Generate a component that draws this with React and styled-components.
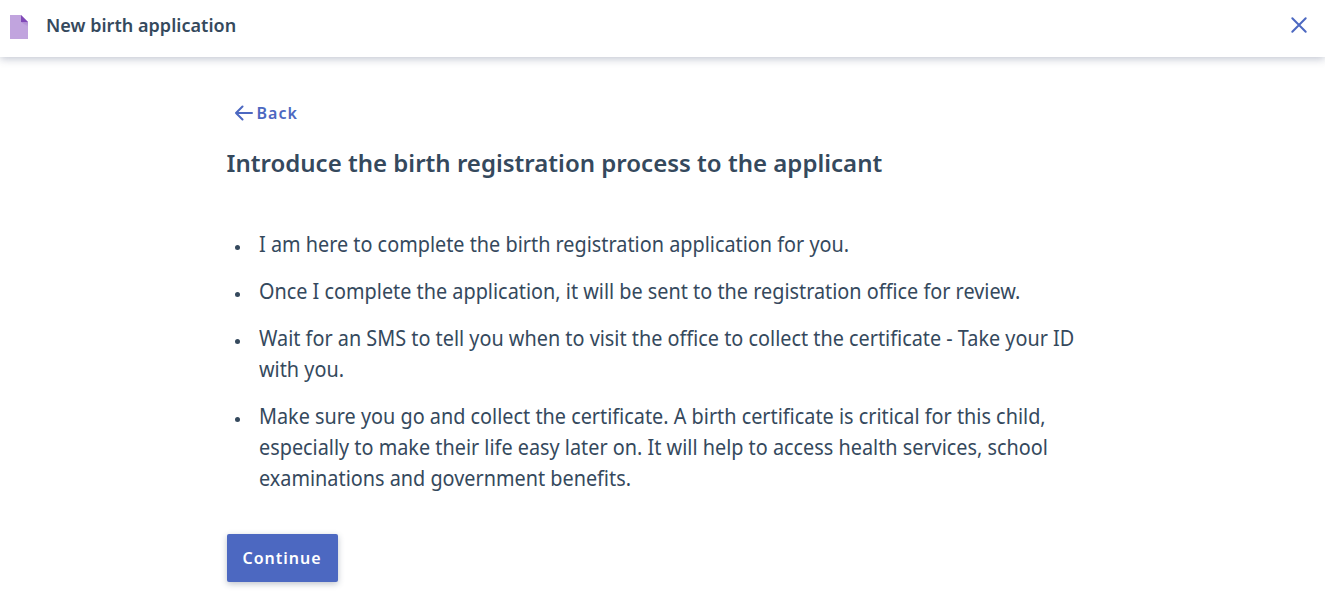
import React from 'react';
import styled, { createGlobalStyle } from 'styled-components';

const GlobalStyle = createGlobalStyle`
  * { box-sizing: border-box; }
  body {
    margin: 0;
    background: #ffffff;
    color: #35495d;
    font-family: 'Noto Sans', sans-serif;
  }
`;

const TopBar = styled.header`
  display: flex;
  align-items: center;
  height: 57px;
  padding: 0 16px 7px 10px;
  background: #ffffff;
  box-shadow: 0 2px 8px rgba(53, 67, 103, 0.3);
`;

const TitleText = styled.div`
  flex: 1;
  margin-left: 18px;
  font-size: 18px;
  line-height: 24px;
  font-weight: 600;
  letter-spacing: 0.03px;
`;

const IconButton = styled.button`
  display: flex;
  padding: 0;
  border: 0;
  background: none;
  color: #4c68c1;
`;

const Content = styled.main`
  width: 872px;
  margin: 0 auto;
  padding: 44px 0 18px;
`;

const BackButton = styled.button`
  display: flex;
  align-items: center;
  gap: 4px;
  height: 24px;
  padding: 0 8px;
  border: 0;
  background: none;
  color: #4c68c1;
  font: 600 16px/24px 'Noto Sans', sans-serif;
  letter-spacing: 1px;
`;

const Heading = styled.h1`
  margin: 20px 0 0;
  font-size: 24px;
  line-height: 36px;
  font-weight: 600;
  letter-spacing: 0.01px;
`;

const List = styled.ul`
  display: flex;
  flex-direction: column;
  gap: 16px;
  margin: 48px 0 0;
  padding: 0;
  list-style: none;
`;

const Item = styled.li`
  display: flex;
  font-size: 21px;
  line-height: 31px;
  &::before {
    content: '';
    flex: none;
    width: 5px;
    height: 5px;
    margin: 16px 19px 0 8px;
    border-radius: 50%;
    background: #35495d;
  }
`;

/* Condensed body text: laid out wider, then narrowed to the column. */
const ItemText = styled.span`
  flex: none;
  width: 888px;
  transform: scaleX(0.9446);
  transform-origin: 0 0;
`;

const PrimaryButton = styled.button`
  width: 111px;
  height: 48px;
  margin-top: 40px;
  padding: 0;
  border: 0;
  border-radius: 2px;
  background: #4c68c1;
  color: #ffffff;
  font: 600 16px/24px 'Noto Sans', sans-serif;
  letter-spacing: 1px;
  box-shadow: 0 2px 6px rgba(53, 67, 93, 0.32);
`;

const steps = [
  'I am here to complete the birth registration application for you.',
  'Once I complete the application, it will be sent to the registration office for review.',
  'Wait for an SMS to tell you when to visit the office to collect the certificate - Take your ID with you.',
  'Make sure you go and collect the certificate. A birth certificate is critical for this child, especially to make their life easy later on. It will help to access health services, school examinations and government benefits.',
];

const DocumentSvg = styled.svg`
  flex: none;
  margin-top: 4px;
`;

const DocumentIcon = () => (
  <DocumentSvg width="18" height="24" viewBox="0 0 18 24">
    <defs>
      <linearGradient id="fold" x1="0" y1="0" x2="0" y2="1">
        <stop offset="0" stopColor="#8049b7" stopOpacity="0.3" />
        <stop offset="1" stopColor="#8049b7" stopOpacity="0" />
      </linearGradient>
    </defs>
    <path d="M0 0h11l7 7v17H0z" fill="#c1a4de" />
    <path d="M11 7h7v5z" fill="url(#fold)" />
    <path d="M11 0l7 7h-7z" fill="#8049b7" />
  </DocumentSvg>
);

const CloseIcon = () => (
  <svg width="20" height="20" viewBox="0 0 20 20" fill="none" stroke="currentColor" strokeWidth="2" strokeLinecap="round">
    <path d="M3.3 3.3l13.4 13.4M16.7 3.3L3.3 16.7" />
  </svg>
);

const ArrowIcon = () => (
  <svg width="18" height="16" viewBox="0 0 18 16" fill="none" stroke="currentColor" strokeWidth="2" strokeLinecap="round" strokeLinejoin="round">
    <path d="M17 8H1M7.5 1.5L1 8l6.5 6.5" />
  </svg>
);

export default function App() {
  return (
    <>
      <GlobalStyle />
      <TopBar>
        <DocumentIcon />
        <TitleText>New birth application</TitleText>
        <IconButton aria-label="Close"><CloseIcon /></IconButton>
      </TopBar>
      <Content>
        <BackButton><ArrowIcon />Back</BackButton>
        <Heading>Introduce the birth registration process to the applicant</Heading>
        <List>
          {steps.map((text) => (
            <Item key={text}><ItemText>{text}</ItemText></Item>
          ))}
        </List>
        <PrimaryButton>Continue</PrimaryButton>
      </Content>
    </>
  );
}
